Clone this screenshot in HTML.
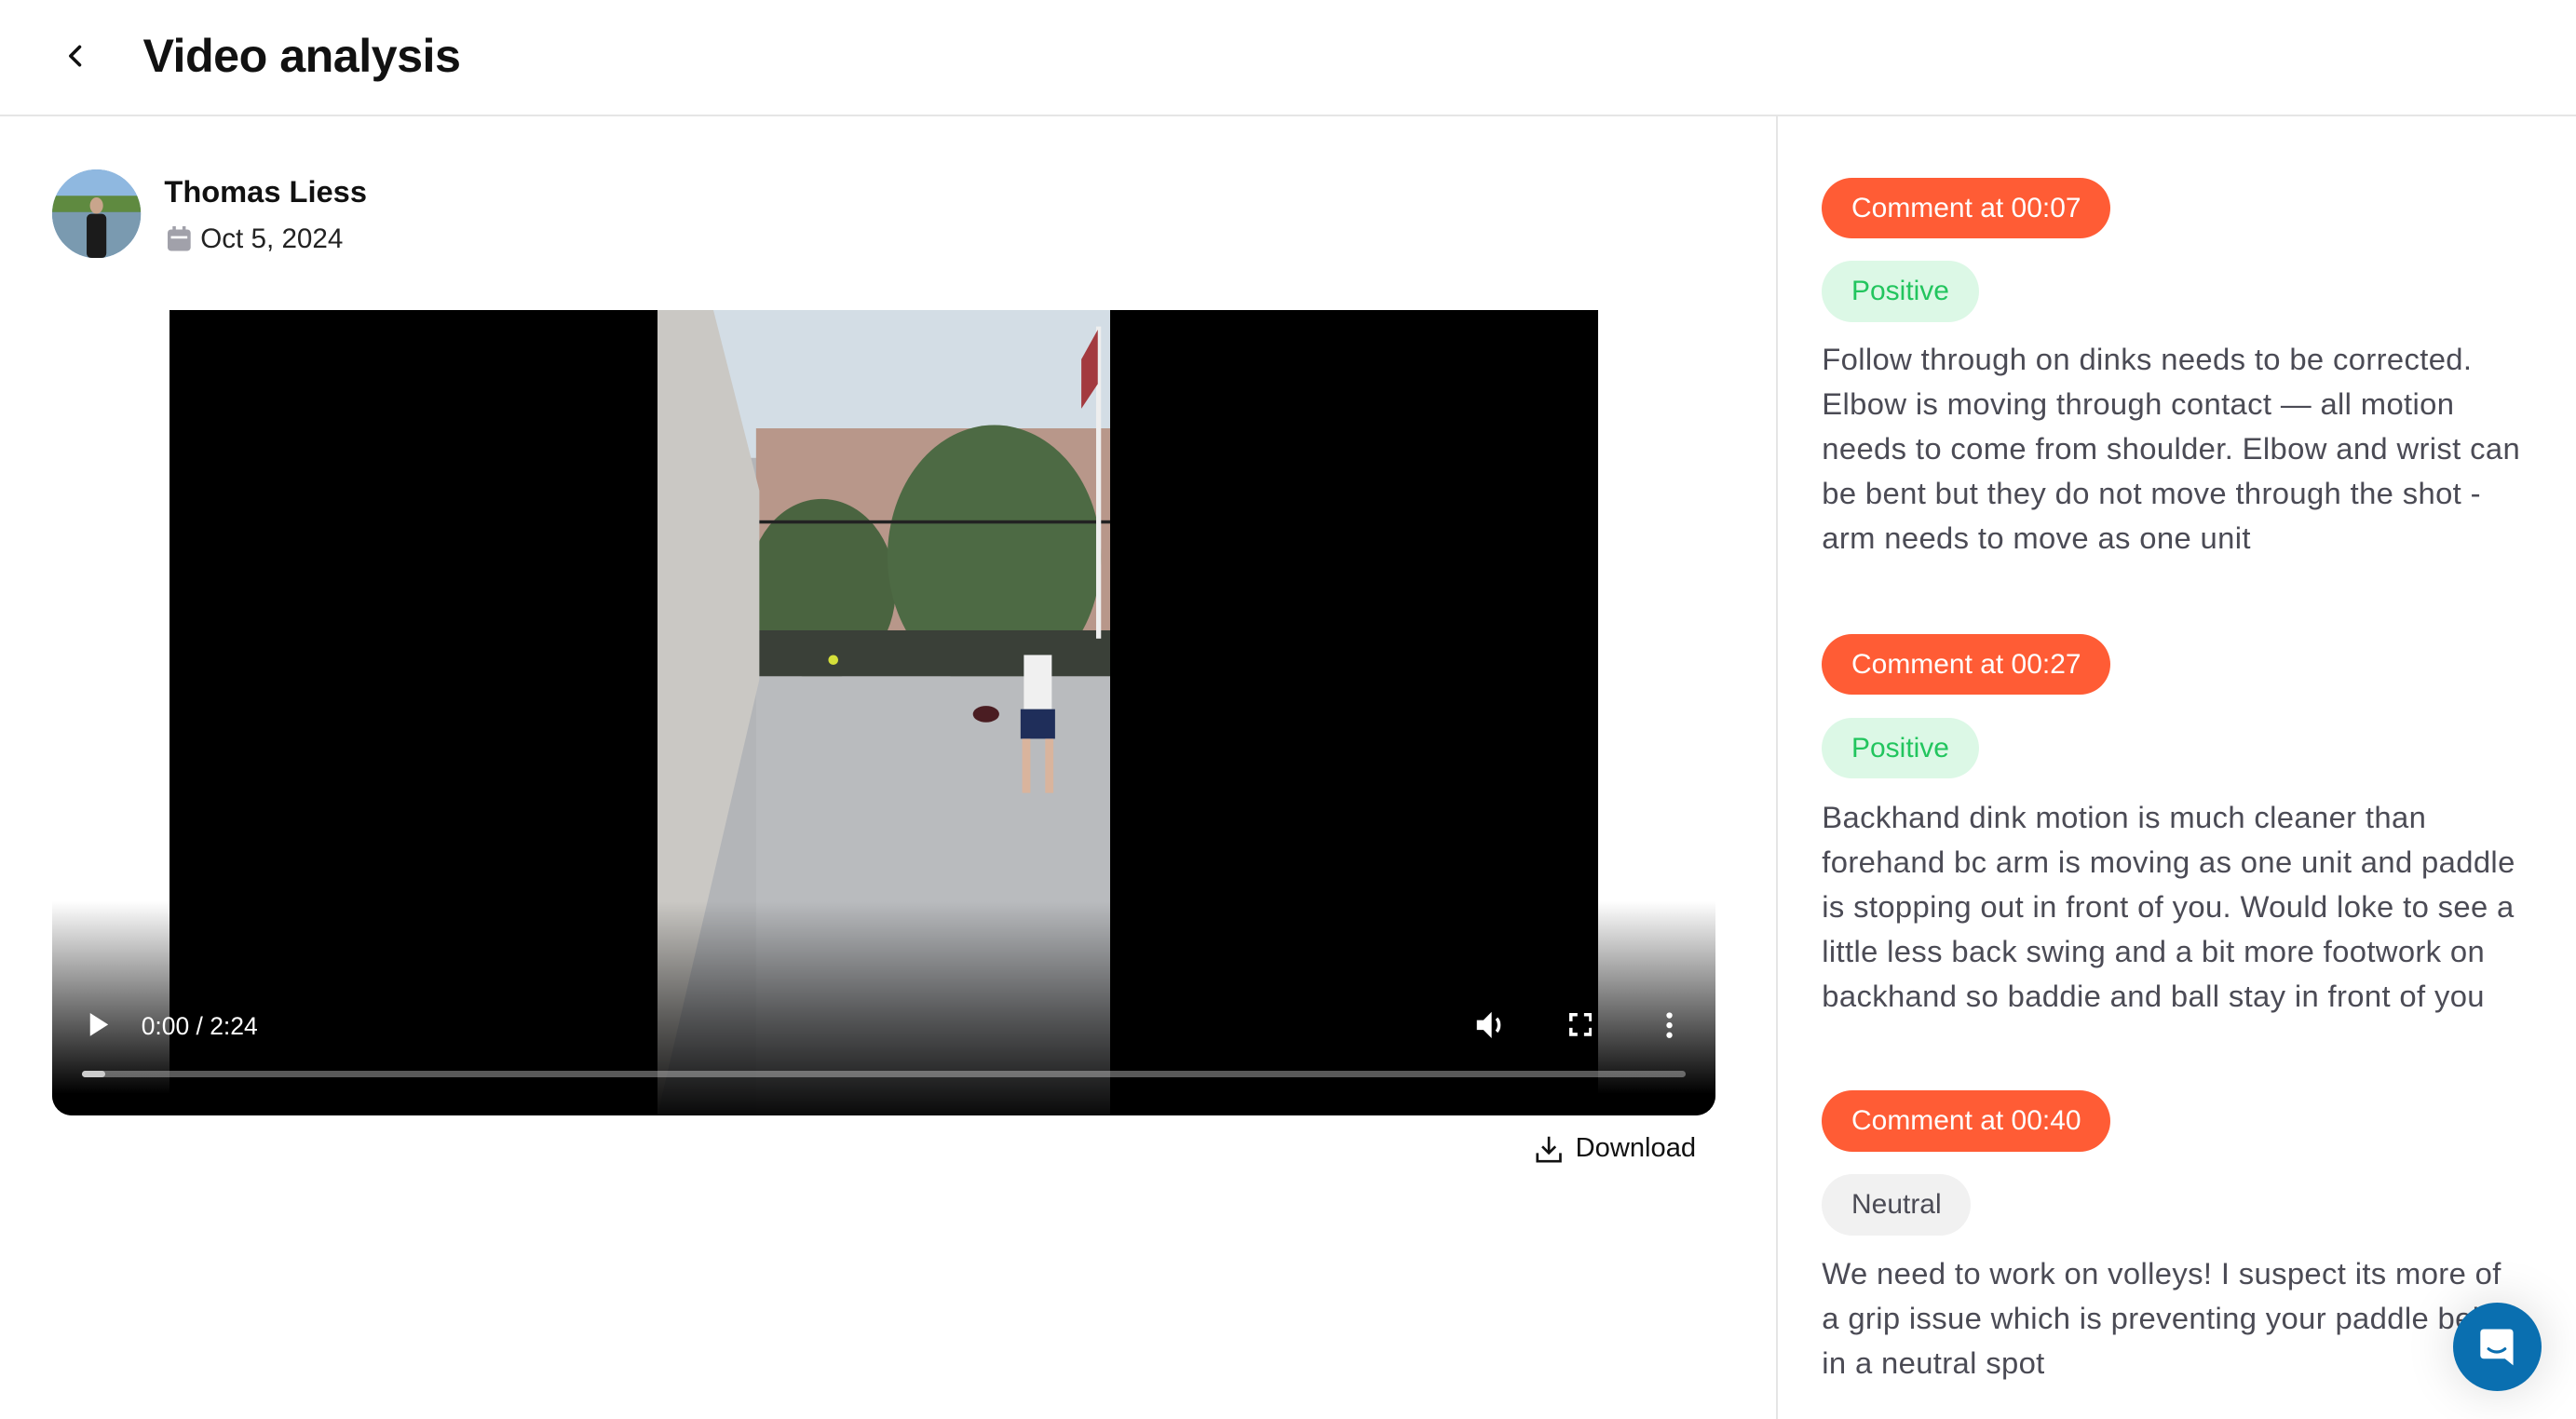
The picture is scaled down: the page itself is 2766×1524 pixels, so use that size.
<!DOCTYPE html>
<html><head><meta charset="utf-8"><style>
html,body{margin:0;padding:0;background:#fff;overflow:hidden}
body{width:2766px;height:1524px}
#r{position:absolute;left:0;top:0;width:1568px;height:864px;zoom:1.7640;font-family:"Liberation Sans",sans-serif;color:#111}
.a{position:absolute;white-space:nowrap}
.pill{position:absolute;left:1109px;height:37px;border-radius:19px;font-size:17px;line-height:37px;padding:0 18px;font-weight:500}
.or{background:#ff5c35;color:#fff}
.gr{background:#dcf8e6;color:#22c55e}
.ne{background:#f1f1f1;color:#4b4b55}
.tx{position:absolute;left:1109px;font-size:18.6px;letter-spacing:0.2px;line-height:27.2px;color:#4b4b55;white-space:nowrap}
</style></head><body><div id="r">
<svg class="a" style="left:38px;top:26px" width="16" height="16" viewBox="0 0 16 16"><path d="M10.5 2.5 L5 8 L10.5 13.5" fill="none" stroke="#111" stroke-width="2" stroke-linecap="round" stroke-linejoin="round"/></svg>
<div class="a" style="left:87px;top:17px;font-size:28.5px;font-weight:700;letter-spacing:-0.3px">Video analysis</div>
<div class="a" style="left:0;top:70px;width:1568px;height:1px;background:#e5e5e5"></div>
<div class="a" style="left:1081px;top:71px;width:1px;height:793px;background:#e5e5e5"></div>
<svg class="a" style="left:32px;top:103px" width="54" height="54"><defs><clipPath id="c"><circle cx="27" cy="27" r="27"/></clipPath></defs><g clip-path="url(#c)"><rect width="54" height="54" fill="#5b8fc4"/><rect y="0" width="54" height="18" fill="#8fb8e0"/><rect y="16" width="54" height="10" fill="#5f8a40"/><rect y="26" width="54" height="28" fill="#7a9ab0"/><ellipse cx="27" cy="22" rx="4" ry="5" fill="#c9a58c"/><rect x="21" y="27" width="12" height="27" rx="3" fill="#1b1b1b"/></g></svg>
<div class="a" style="left:100px;top:106px;font-size:18.5px;font-weight:700">Thomas Liess</div>
<svg class="a" style="left:102px;top:138px" width="14" height="15"><rect x="0" y="2" width="14" height="13" rx="2" fill="#a1a1aa"/><rect x="3" y="0" width="2" height="4" fill="#a1a1aa"/><rect x="9" y="0" width="2" height="4" fill="#a1a1aa"/><rect x="2" y="6" width="10" height="1.5" fill="#fff"/></svg>
<div class="a" style="left:122px;top:136px;font-size:16.8px;color:#222">Oct 5, 2024</div>

<div class="a" style="left:32px;top:189px;width:1012px;height:490px;border-radius:0 0 12px 12px;overflow:hidden">
 <div class="a" style="left:71px;top:0;width:870px;height:490px;background:#000"></div>
 <svg class="a" style="left:368px;top:0" width="276" height="490" viewBox="0 0 276 490">
  <rect width="276" height="490" fill="#b3b5b8"/>
  <rect width="276" height="90" fill="#d3dde5"/>
  <rect x="60" y="72" width="216" height="150" fill="#b8978a"/>
  <ellipse cx="100" cy="170" rx="45" ry="55" fill="#4a6440"/>
  <ellipse cx="205" cy="150" rx="65" ry="80" fill="#4d6a44"/>
  <rect x="60" y="128" width="216" height="2" fill="#222"/>
  <rect x="60" y="195" width="216" height="28" fill="#3a4038"/>
  <rect x="60" y="223" width="216" height="267" fill="#b9bbbe"/>
  <polygon points="0,0 34,0 62,110 62,225 0,490" fill="#cac8c4"/>
  <rect x="267" y="10" width="3" height="190" fill="#eee"/>
  <polygon points="258,30 268,12 268,45 258,60" fill="#a33a3f"/>
  <rect x="223" y="210" width="17" height="33" fill="#f0f0f0"/>
  <rect x="221" y="243" width="21" height="18" fill="#1f2e5a"/>
  <rect x="222" y="261" width="5" height="33" fill="#d9b49d"/><rect x="236" y="261" width="5" height="33" fill="#d9b49d"/>
  <ellipse cx="200" cy="246" rx="8" ry="5" fill="#4a1d22"/>
  <circle cx="107" cy="213" r="3" fill="#d5e03a"/>
 </svg>
 <div class="a" style="left:0;top:360px;width:1012px;height:130px;background:linear-gradient(rgba(0,0,0,0),rgba(0,0,0,0.55) 55%,rgba(0,0,0,0.95))"></div>
 <div class="a" style="left:0;top:360px;width:71px;height:130px;background:linear-gradient(#fff,#000 90%)"></div>
 <div class="a" style="left:941px;top:360px;width:71px;height:130px;background:linear-gradient(#fff,#000 90%)"></div>
 <svg class="a" style="left:22px;top:428px" width="12" height="14"><path d="M1 0 L12 7 L1 14Z" fill="#fff"/></svg>
 <div class="a" style="left:54px;top:427px;color:#fff;font-size:15px">0:00 / 2:24</div>
 <svg class="a" style="left:866px;top:426px" width="20" height="18" viewBox="0 0 20 18"><path d="M1 6h4l5-5v16l-5-5H1z" fill="#fff"/><path d="M13 5c2 2 2 6 0 8" stroke="#fff" stroke-width="2" fill="none"/></svg>
 <svg class="a" style="left:923px;top:428px" width="14" height="14" fill="none" stroke="#fff" stroke-width="2"><path d="M1 5V1h4M9 1h4v4M13 9v4H9M5 13H1V9"/></svg>
 <svg class="a" style="left:982px;top:427px" width="4" height="16"><circle cx="2" cy="2" r="1.8" fill="#fff"/><circle cx="2" cy="8" r="1.8" fill="#fff"/><circle cx="2" cy="14" r="1.8" fill="#fff"/></svg>
 <div class="a" style="left:18px;top:463px;width:976px;height:4px;border-radius:2px;background:rgba(255,255,255,0.35)"></div>
 <div class="a" style="left:18px;top:463px;width:14px;height:4px;border-radius:2px;background:#ccc"></div>
</div>
<svg class="a" style="left:935px;top:691px" width="16" height="17" fill="none" stroke="#111" stroke-width="1.5"><path d="M8 1v10M4 7l4 4 4-4M1 11v5h14v-5"/></svg>
<div class="a" style="left:959px;top:690px;font-size:16.5px;font-weight:500">Download</div>

<div class="pill or" style="top:108px">Comment at 00:07</div>
<div class="pill gr" style="top:159px">Positive</div>
<div class="tx" style="top:205px">Follow through on dinks needs to be corrected.<br>Elbow is moving through contact — all motion<br>needs to come from shoulder. Elbow and wrist can<br>be bent but they do not move through the shot -<br>arm needs to move as one unit</div>
<div class="pill or" style="top:386px">Comment at 00:27</div>
<div class="pill gr" style="top:437px">Positive</div>
<div class="tx" style="top:484px">Backhand dink motion is much cleaner than<br>forehand bc arm is moving as one unit and paddle<br>is stopping out in front of you. Would loke to see a<br>little less back swing and a bit more footwork on<br>backhand so baddie and ball stay in front of you</div>
<div class="pill or" style="top:664px">Comment at 00:40</div>
<div class="pill ne" style="top:715px">Neutral</div>
<div class="tx" style="top:762px">We need to work on volleys! I suspect its more of<br>a grip issue which is preventing your paddle being<br>in a neutral spot</div>
<div class="a" style="left:1493px;top:793px;width:54px;height:54px;border-radius:50%;background:#0a6fb0;box-shadow:0 0 30px rgba(0,0,0,0.15)"></div>
<svg class="a" style="left:1507px;top:807px" width="26" height="26" viewBox="0 0 26 26"><path d="M5 2h16a2 2 0 0 1 2 2v20l-5-4H5a2 2 0 0 1-2-2V4a2 2 0 0 1 2-2z" fill="#fff"/><path d="M8 14c3 2.5 7 2.5 10 0" stroke="#0a6fb0" stroke-width="1.8" fill="none" stroke-linecap="round"/></svg>
</div></body></html>
